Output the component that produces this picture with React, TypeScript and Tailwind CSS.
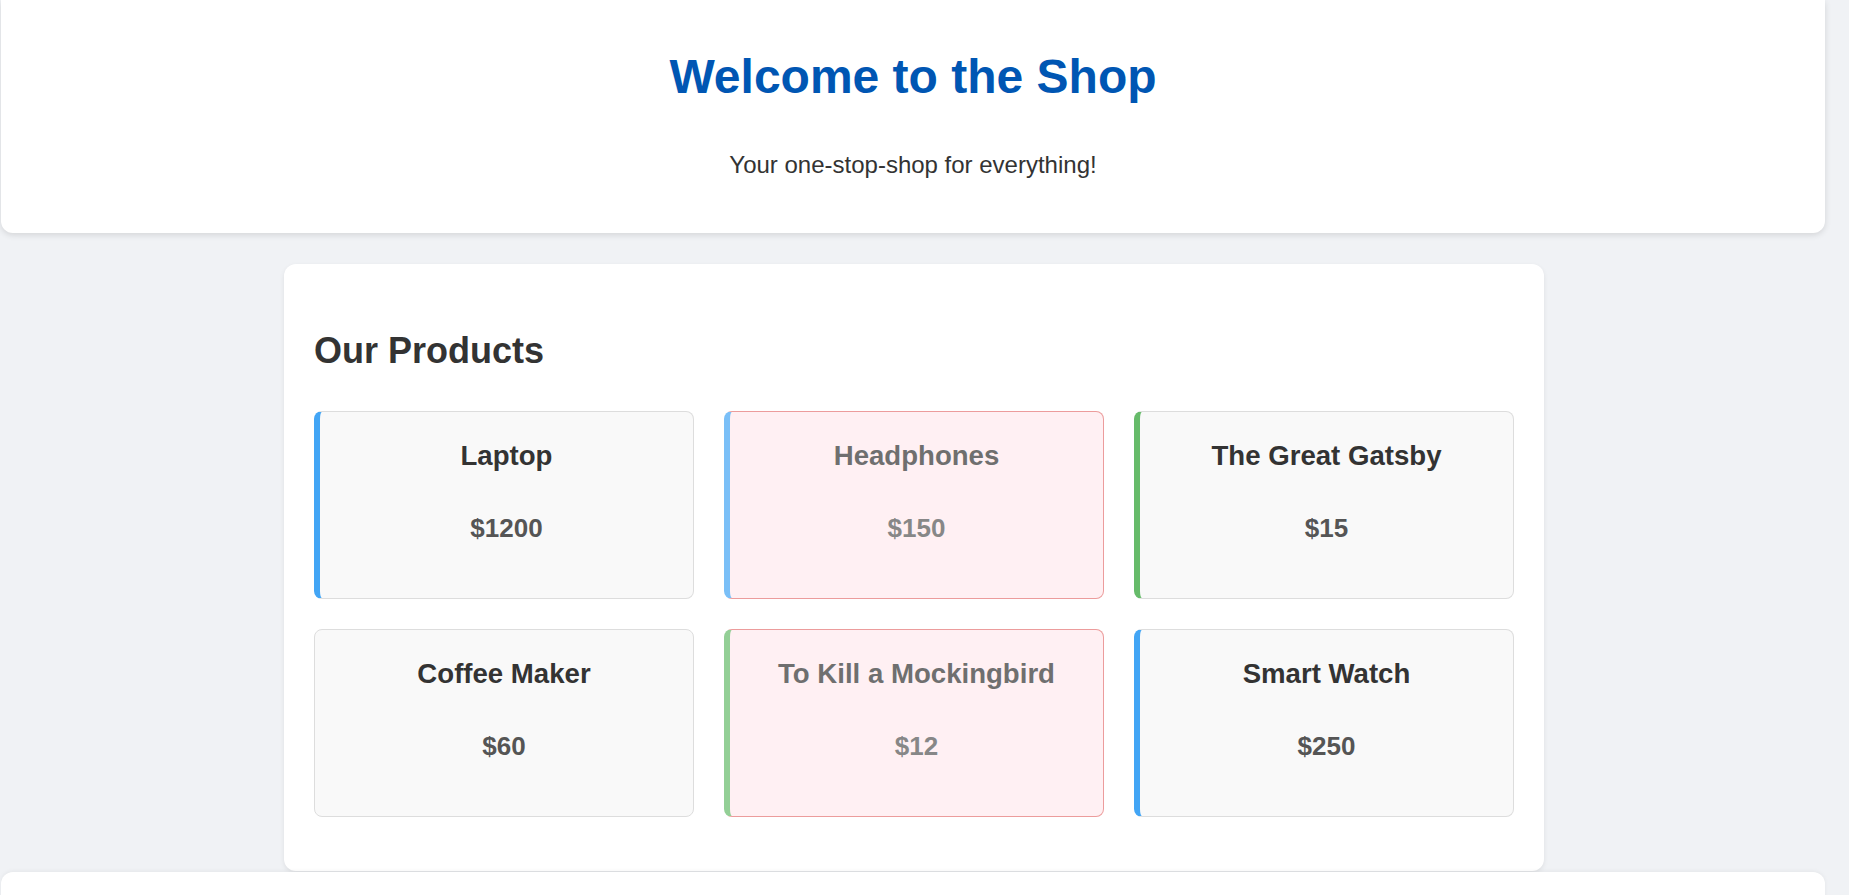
import React from "react";

type Product = {
  name: string;
  price: string;
  accent: "blue" | "green" | "none";
  out: boolean;
};

const products: Product[] = [
  { name: "Laptop", price: "$1200", accent: "blue", out: false },
  { name: "Headphones", price: "$150", accent: "blue", out: true },
  { name: "The Great Gatsby", price: "$15", accent: "green", out: false },
  { name: "Coffee Maker", price: "$60", accent: "none", out: false },
  { name: "To Kill a Mockingbird", price: "$12", accent: "green", out: true },
  { name: "Smart Watch", price: "$250", accent: "blue", out: false },
];

function Card({ p }: { p: Product }) {
  const accent =
    p.accent === "blue"
      ? "border-l-[6px] border-l-[#42a5f5]"
      : p.accent === "green"
      ? "border-l-[6px] border-l-[#66bb6a]"
      : "";
  const base = p.out
    ? "bg-[#ffebee] border-[#e57373] opacity-70"
    : "bg-[#f9f9f9] border-[#dddddd]";
  return (
    <div
      className={`h-[188px] rounded-[8px] border ${base} ${accent} flex flex-col items-center pt-[30px] text-center`}
    >
      <h3 className="text-[27.6px] font-bold leading-none text-[#333333]">{p.name}</h3>
      <p className="mt-[45px] text-[26px] font-bold leading-none text-[#555555]">{p.price}</p>
    </div>
  );
}

export default function App() {
  return (
    <div
      className="min-h-screen bg-[#f0f2f5]"
      style={{ fontFamily: '"Liberation Sans", Arial, sans-serif' }}
    >
      <div className="w-[1828px] flex flex-col items-center">
        <header className="ml-[1px] w-[1824px] self-start rounded-b-[12px] bg-white shadow-[0_2px_6px_rgba(0,0,0,0.12)] pt-[53px] pb-[56px] text-center">
          <h1 className="text-[48px] font-bold leading-none text-[#0056b3]">Welcome to the Shop</h1>
          <p className="mt-[52px] text-[24px] leading-none text-[#333333]">
            Your one-stop-shop for everything!
          </p>
        </header>

        <main className="mt-[31px] w-[1260px] rounded-[12px] bg-white shadow-[0_2px_5px_rgba(0,0,0,0.08)] px-[30px] pt-[69px] pb-[54px]">
          <h2 className="text-[36px] font-bold leading-none text-[#333333]">Our Products</h2>
          <div className="mt-[42px] grid grid-cols-3 gap-x-[30px] gap-y-[30px]">
            {products.map((p) => (
              <Card key={p.name} p={p} />
            ))}
          </div>
        </main>

        <footer className="mt-[1px] ml-[1px] w-[1824px] self-start h-[120px] rounded-t-[12px] bg-white shadow-[0_-1px_4px_rgba(0,0,0,0.05)]" />
      </div>
    </div>
  );
}
